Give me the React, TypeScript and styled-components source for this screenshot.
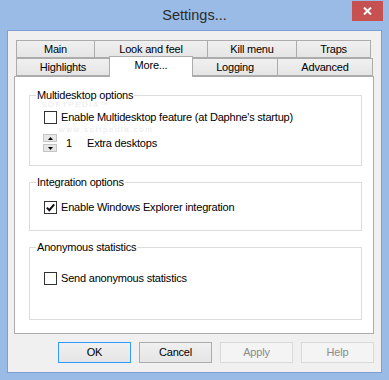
import React from "react";
import styled, { createGlobalStyle } from "styled-components";

const GlobalStyle = createGlobalStyle`
  body {
    margin: 0;
    background: #99bbe6;
    font-family: "Liberation Sans", Arial, sans-serif;
  }
`;

const Frame = styled.div`
  width: 389px;
  height: 380px;
  box-sizing: border-box;
  background: #99bbe6;
  padding: 0 7px 7px 7px;
  display: flex;
  flex-direction: column;
`;

const TitleBar = styled.div`
  height: 30px;
  display: grid;
  grid-template-columns: 1fr auto 1fr;
  align-items: start;
`;

const Title = styled.div`
  font-size: 14.5px;
  color: #2b2b2b;
  line-height: 30px;
`;

const CloseButton = styled.div`
  justify-self: end;
  margin-top: 1px;
  margin-right: -1px;
  width: 31px;
  height: 20px;
  background: #c75050;
  display: flex;
  align-items: center;
  justify-content: center;
`;

const Client = styled.div`
  flex: 1;
  border: 1px solid #7b9ed3;
  background: #f0f0f0;
  padding: 9px 7px 9px 6px;
  display: flex;
  flex-direction: column;
  font-size: 11px;
  letter-spacing: -0.2px;
  color: #000;
`;

const TabRows = styled.div`
  display: flex;
  flex-direction: column;
  padding-left: 2px;
`;

const TabRow = styled.div`
  display: flex;
  height: 18px;
  align-items: flex-start;
`;

const Tab = styled.div<{ $width: number; $active?: boolean }>`
  box-sizing: border-box;
  width: ${p => p.$width + 1}px;
  margin-right: -1px;
  height: ${p => (p.$active ? 21 : 18)}px;
  margin-top: ${p => (p.$active ? -2 : 0)}px;
  border: 1px solid #acacac;
  border-bottom: ${p => (p.$active ? "none" : "1px solid #acacac")};
  background: ${p => (p.$active ? "#ffffff" : "linear-gradient(#f0f0f0, #e5e5e5)")};
  position: relative;
  z-index: ${p => (p.$active ? 2 : 1)};
  text-align: center;
  line-height: ${p => (p.$active ? 17 : 16)}px;
`;

const Panel = styled.div`
  flex: 1;
  border: 1px solid #acacac;
  background: #ffffff;
  padding: 12px 11px 0 14px;
  display: flex;
  flex-direction: column;
  gap: 10px;
  position: relative;
`;

const GroupBox = styled.fieldset`
  margin: 0;
  border: 1px solid #dcdcdc;
  padding: 0;
  min-width: 0;
  position: relative;
  z-index: 1;
`;

const Legend = styled.legend`
  line-height: 12px;
  padding: 0 1px;
  margin-left: 6px;
`;

const GroupBody = styled.div<{ $top: number; $bottom: number }>`
  display: flex;
  flex-direction: column;
  gap: 10px;
  padding: ${p => p.$top}px 0 ${p => p.$bottom}px 14px;
`;

const CheckRow = styled.label`
  display: flex;
  align-items: center;
  height: 14px;
  gap: 4px;
`;

const Box = styled.span`
  box-sizing: border-box;
  width: 13px;
  height: 13px;
  border: 1px solid #333333;
  background: #ffffff;
  display: flex;
  align-items: center;
  justify-content: center;
`;

const SpinRow = styled.div`
  display: flex;
  align-items: center;
  height: 18px;
  margin-left: -1px;
`;

const Spinner = styled.div`
  display: flex;
  flex-direction: column;
  gap: 2px;
  margin-right: 9px;
`;

const SpinButton = styled.div`
  box-sizing: border-box;
  width: 14px;
  height: 8px;
  background: #e6e6e6;
  border: 1px solid #c4c4c4;
  display: flex;
  align-items: center;
  justify-content: center;
`;

const SpinValue = styled.span`
  width: 21px;
`;

const Watermark = styled.div<{ $size: number }>`
  position: absolute;
  font-size: ${p => p.$size}px;
  line-height: ${p => p.$size}px;
  color: #eaeaea;
  letter-spacing: 1.5px;
  pointer-events: none;
  z-index: 0;
`;

const ButtonBar = styled.div`
  display: flex;
  justify-content: flex-end;
  gap: 8px;
  margin-top: 8px;
`;

const Button = styled.div<{ $variant: "default" | "normal" | "disabled" }>`
  box-sizing: border-box;
  width: 73px;
  height: 21px;
  line-height: 19px;
  text-align: center;
  border: 1px solid
    ${p => (p.$variant === "default" ? "#3399ff" : p.$variant === "normal" ? "#acacac" : "#d9d9d9")};
  background: ${p =>
    p.$variant === "disabled" ? "#f4f4f4" : "linear-gradient(#f0f0f0, #e5e5e5)"};
  color: ${p => (p.$variant === "disabled" ? "#8b8b8b" : "#000")};
`;

const topTabs = [
  { label: "Main", width: 78 },
  { label: "Look and feel", width: 113 },
  { label: "Kill menu", width: 89 },
  { label: "Traps", width: 74 },
];

const bottomTabs = [
  { label: "Highlights", width: 93 },
  { label: "More...", width: 83, active: true },
  { label: "Logging", width: 85 },
  { label: "Advanced", width: 95 },
];

const Check = () => (
  <svg width="9" height="9" viewBox="0 0 9 9">
    <path d="M0.8 4.6 L3.3 7.2 L8.2 1.4" fill="none" stroke="#111" strokeWidth="2" />
  </svg>
);

const Arrow = ({ up }: { up?: boolean }) => (
  <svg width="5" height="3" viewBox="0 0 5 3">
    <path d={up ? "M0 3 L2.5 0 L5 3 Z" : "M0 0 L2.5 3 L5 0 Z"} fill="#000" />
  </svg>
);

const CheckBox: React.FC<{ checked?: boolean; label: string }> = ({ checked, label }) => (
  <CheckRow>
    <Box>{checked && <Check />}</Box>
    {label}
  </CheckRow>
);

export default function App() {
  return (
    <>
      <GlobalStyle />
      <Frame>
        <TitleBar>
          <div />
          <Title>Settings...</Title>
          <CloseButton>
            <svg width="9" height="8" viewBox="0 0 9 8">
              <path d="M1 0.5 L8 7.5 M8 0.5 L1 7.5" stroke="#fff" strokeWidth="2" />
            </svg>
          </CloseButton>
        </TitleBar>
        <Client>
          <TabRows>
            <TabRow>
              {topTabs.map(t => (
                <Tab key={t.label} $width={t.width}>
                  {t.label}
                </Tab>
              ))}
            </TabRow>
            <TabRow>
              {bottomTabs.map(t => (
                <Tab key={t.label} $width={t.width} $active={t.active}>
                  {t.label}
                </Tab>
              ))}
            </TabRow>
          </TabRows>
          <Panel>
            <Watermark $size={8} style={{ left: 26, top: 24 }}>SOFTPEDIA™</Watermark>
            <Watermark $size={8} style={{ left: 44, top: 49 }}>www.softpedia.com</Watermark>
            <GroupBox>
              <Legend>Multidesktop options</Legend>
              <GroupBody $top={9} $bottom={13}>
                <CheckBox label="Enable Multidesktop feature (at Daphne's startup)" />
                <SpinRow>
                  <Spinner>
                    <SpinButton>
                      <Arrow up />
                    </SpinButton>
                    <SpinButton>
                      <Arrow />
                    </SpinButton>
                  </Spinner>
                  <SpinValue>1</SpinValue>
                  Extra desktops
                </SpinRow>
              </GroupBody>
            </GroupBox>
            <GroupBox>
              <Legend>Integration options</Legend>
              <GroupBody $top={12} $bottom={16}>
                <CheckBox checked label="Enable Windows Explorer integration" />
              </GroupBody>
            </GroupBox>
            <GroupBox>
              <Legend>Anonymous statistics</Legend>
              <GroupBody $top={18} $bottom={34}>
                <CheckBox label="Send anonymous statistics" />
              </GroupBody>
            </GroupBox>
          </Panel>
          <ButtonBar>
            <Button $variant="default">OK</Button>
            <Button $variant="normal">Cancel</Button>
            <Button $variant="disabled">Apply</Button>
            <Button $variant="disabled">Help</Button>
          </ButtonBar>
        </Client>
      </Frame>
    </>
  );
}
